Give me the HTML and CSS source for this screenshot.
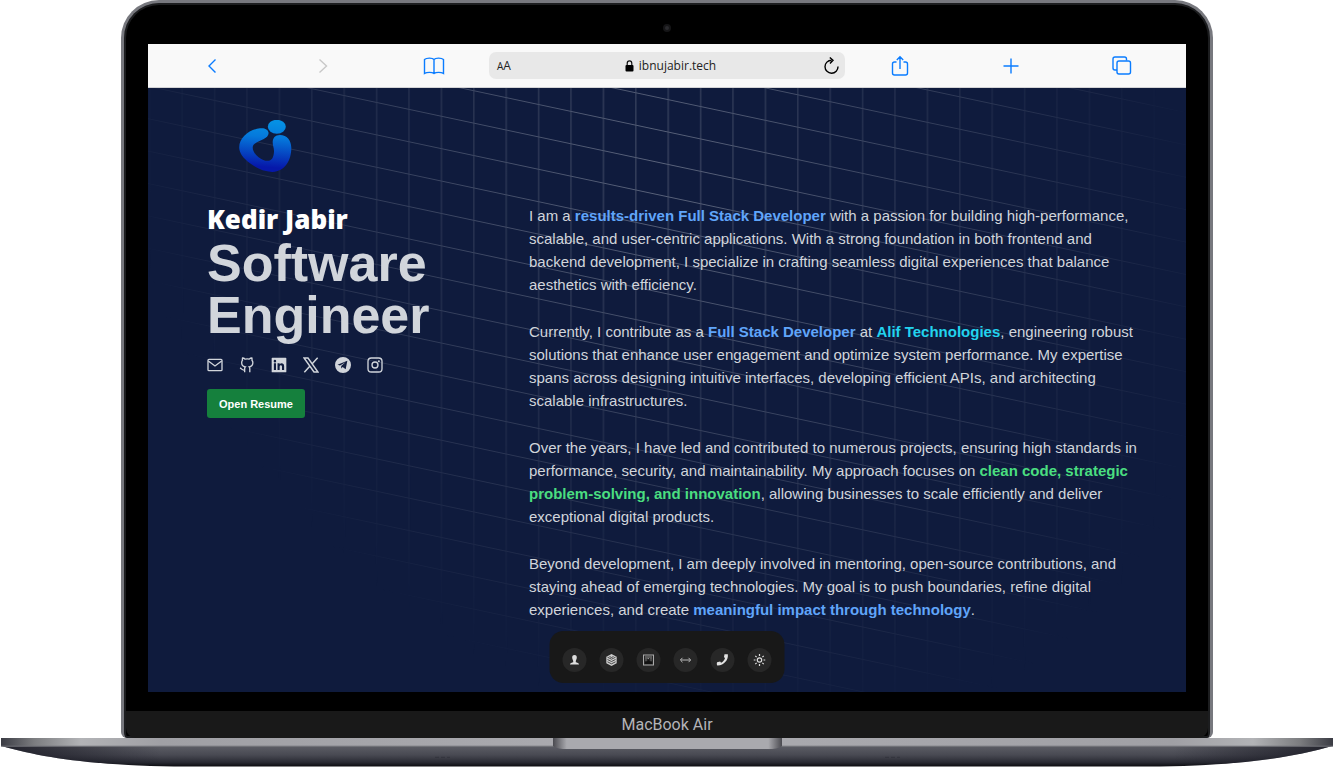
FILE: index.html
```html
<!DOCTYPE html>
<html lang="en">
<head>
<meta charset="utf-8">
<meta name="viewport" content="width=device-width, initial-scale=1">
<title>Kedir Jabir - Software Engineer</title>
<link rel="stylesheet" href="styles.css">
</head>
<body>
<div class="laptop">
  <div class="lid">
    <div class="camera"></div>
    <div class="screen">
      <nav class="toolbar" aria-label="Browser">
        <button class="tool" aria-label="Back"><svg width="22" height="22" viewBox="0 0 22 22"><path d="M14.5 4.500L8 11l6.500 6.500"/></svg></button>
        <button class="tool off" aria-label="Forward"><svg width="22" height="22" viewBox="0 0 22 22"><path d="M7.500 4.500L14.500 11l-7 6.500"/></svg></button>
        <button class="tool" aria-label="Bookmarks"><svg width="22" height="22" viewBox="0 0 22 22"><path d="M11 4.500C9.500 2.700 3.500 2.700 1.500 4.500v14c2.500-1.500 7.500-1.500 9.500 0 2-1.500 7-1.500 9.500 0v-14c-2-1.800-8-1.800-9.500 0zM11 4.500v14"/></svg></button>
        <div class="address">
          <span class="aa"><small>A</small>A</span>
          <span class="url"><svg width="9" height="12" viewBox="0 0 9 12"><path d="M2.200 5.500V3.400a2.300 2.600 0 0 1 4.600 0v2.100" fill="none" stroke="#111" stroke-width="1.200"/><rect x=".5" y="5" width="8" height="6.500" rx="1" fill="#000"/></svg>ibnujabir.tech</span>
          <button class="reload" aria-label="Reload"><svg width="18" height="18" viewBox="0 0 18 18"><path d="M9.500 3.200A6.500 6.500 0 1 0 16 9.500M7.800 .5L11 3.300 8 6.500"/></svg></button>
        </div>
        <button class="tool" aria-label="Share"><svg width="22" height="22" viewBox="0 0 22 22"><path d="M7.500 7H5.500a2 2 0 0 0-2 2v9a2 2 0 0 0 2 2h11a2 2 0 0 0 2-2V9a2 2 0 0 0-2-2h-2M11 14V2M7.800 5L11 1.800 14.200 5"/></svg></button>
        <button class="tool" aria-label="New tab"><svg width="22" height="22" viewBox="0 0 22 22"><path d="M11 3.500v15M3.500 11h15"/></svg></button>
        <button class="tool" aria-label="Tabs"><svg width="22" height="22" viewBox="0 0 22 22"><path d="M6 15h-2a2 2 0 0 1-2-2v-9a2 2 0 0 1 2-2h9.500a2 2 0 0 1 2 2v1.500"/><rect x="6" y="6" width="13.500" height="13" rx="2"/></svg></button>
      </nav>
      <main class="page">
        <svg class="grid-lines" aria-hidden="true">
          <defs>
            <pattern id="cells" width="32.400" height="32.400" patternUnits="userSpaceOnUse" patternTransform="translate(1 -2) skewY(12)"><path d="M0 .5H32.400" stroke="#b4bac6"/><path d="M.8 0V32.400" stroke="#9ca3af" stroke-width="1.500" stroke-opacity=".6"/></pattern>
            <radialGradient id="fade" gradientUnits="userSpaceOnUse" cx="0" cy="0" r="560" gradientTransform="translate(515 82) skewY(12)"><stop offset="0" stop-color="#fff" stop-opacity=".46"/><stop offset="1" stop-color="#fff" stop-opacity="0"/></radialGradient>
            <mask id="spot" maskUnits="userSpaceOnUse" x="0" y="0" width="100%" height="100%"><rect width="100%" height="100%" fill="url(#fade)"/></mask>
          </defs>
          <rect width="100%" height="100%" fill="url(#cells)" mask="url(#spot)"/>
        </svg>
        <header class="brand">
          <svg width="54" height="54" viewBox="0 0 54 54" role="img" aria-label="Logo">
            <defs><linearGradient id="ink" gradientUnits="userSpaceOnUse" x1="30" y1="2" x2="26" y2="52"><stop offset="0" stop-color="#0590e4"/><stop offset=".3" stop-color="#0579dc"/><stop offset=".9" stop-color="#0618aa"/></linearGradient></defs>
            <ellipse cx="37.800" cy="6.800" rx="9" ry="7" fill="url(#ink)"/>
            <path d="M21 8.300C25.500 7.600 29 9.500 29.500 12.500 30 15.500 27.500 17.600 24.300 19.300 19 21.800 13.700 23.500 13.700 27.500 13.700 33 20 38.500 24.300 40 29.500 42 34.500 41 35 31.700 35.200 28 33.700 26 33.700 22.500 33.700 18 36 15 41 15 48 15 52 20 52.300 27.500 52.500 40 46 51.700 33.500 51.900 25 52 17 48 11 43.300 4.500 38.500.2 33 .2 27.500.2 17 11 9.500 21 8.300z" fill="url(#ink)"/>
          </svg>
        </header>
        <div class="columns">
          <section class="intro">
            <p class="name">Kedir Jabir</p>
            <h1>Software Engineer</h1>
            <div class="social">
              <a href="#mail" aria-label="Email"><svg viewBox="0 0 24 24"><g fill="none" stroke="currentColor" stroke-width="2"><rect x="1.500" y="3.500" width="21" height="17" rx="1.500"/><path d="M2 6l10 7.500L22 6"/></g></svg></a>
              <a href="#github" aria-label="GitHub"><svg viewBox="0 0 24 24"><path d="M8.500 23v-5.500c0-1.500.3-2 1-2.800C6 14.200 4 12.500 4 8.500c0-1.500.5-2.700 1.300-3.700C4.800 3.500 5 2.500 5.300 1.500c1.700 0 3 .8 4 1.700a13 13 0 0 1 6 0c1-1 2.500-1.700 4-1.700.4 1 .5 2 .1 3.300.9 1 1.400 2.200 1.400 3.700 0 4-2.300 5.700-5.600 6.200.7.800 1 1.500 1 2.800V23M8.500 19.500C4.500 20.500 4.500 17.500 1.500 16.500" fill="none" stroke="currentColor" stroke-width="2"/></svg></a>
              <a href="#linkedin" aria-label="LinkedIn"><svg viewBox="0 0 24 24"><path fill="currentColor" fill-rule="evenodd" d="M2 1h20a1 1 0 0 1 1 1v20a1 1 0 0 1-1 1H2a1 1 0 0 1-1-1V2a1 1 0 0 1 1-1zM4.300 9.500V19.500H7.500V9.500zM5.900 4.300a1.900 1.900 0 1 0 0 3.800 1.900 1.900 0 0 0 0-3.800zM9.800 9.500v10H13v-5c0-3 3.500-3 3.500 0v5h3.200v-5.800c0-5-5-5.500-6.700-2.700V9.500z"/></svg></a>
              <a href="#x" aria-label="X"><svg viewBox="0 0 24 24"><path d="M1.500 1.500h6l15 21h-6zM22 1L13.500 10.500M10.500 13.500L2 23" fill="none" stroke="currentColor" stroke-width="2.200"/></svg></a>
              <a href="#telegram" aria-label="Telegram"><svg viewBox="0 0 24 24"><path fill="currentColor" fill-rule="evenodd" d="M12 0a12 12 0 1 0 0 24 12 12 0 0 0 0-24zM18.500 5.800L16 18.200 11.500 15 9.300 17.200V13.500L15.500 8 7.500 12.800 3.800 11.500z"/></svg></a>
              <a href="#instagram" aria-label="Instagram"><svg viewBox="0 0 24 24"><g fill="none" stroke="currentColor" stroke-width="2"><rect x="1.500" y="1.500" width="21" height="21" rx="5"/><circle cx="12" cy="12" r="4.500"/></g><circle cx="17.800" cy="6.200" r="1.500" fill="currentColor"/></svg></a>
            </div>
            <button class="resume">Open Resume</button>
          </section>
          <section class="about">
            <p>I am a <strong class="blue">results-driven Full Stack Developer</strong> with a passion for building high-performance,<br>scalable, and user-centric applications. With a strong foundation in both frontend and<br>backend development, I specialize in crafting seamless digital experiences that balance<br>aesthetics with efficiency.</p>
            <p>Currently, I contribute as a <strong class="blue">Full Stack Developer</strong> at <strong class="cyan">Alif Technologies</strong>, engineering robust<br>solutions that enhance user engagement and optimize system performance. My expertise<br>spans across designing intuitive interfaces, developing efficient APIs, and architecting<br>scalable infrastructures.</p>
            <p>Over the years, I have led and contributed to numerous projects, ensuring high standards in<br>performance, security, and maintainability. My approach focuses on <strong class="green">clean code, strategic<br>problem-solving, and innovation</strong>, allowing businesses to scale efficiently and deliver<br>exceptional digital products.</p>
            <p>Beyond development, I am deeply involved in mentoring, open-source contributions, and<br>staying ahead of emerging technologies. My goal is to push boundaries, refine digital<br>experiences, and create <strong class="blue">meaningful impact through technology</strong>.</p>
          </section>
        </div>
        <nav class="dock" aria-label="Sections">
          <button aria-label="About"><svg viewBox="0 0 12 12"><path fill="#ddd" d="M6 1c1.700 0 2.500 1.200 2.300 2.800C8.200 5.300 7.500 6 7.300 7v1.200c1.200.5 3.200.6 3.200 2.300h-9c0-1.700 2-1.800 3.200-2.300V7C4.500 6 3.800 5.300 3.700 3.800 3.500 2.200 4.300 1 6 1z"/></svg></button>
          <button aria-label="Skills"><svg viewBox="0 0 12 12"><path fill="#ccc" d="M6 0l5.200 2.800v6.400L6 12 .8 9.200V2.800z"/><path d="M2 3.200l4 2 4-2M2 5.500l4 2 4-2M2 7.800l4 2 4-2M4 2.500l2 1 2-1" fill="none" stroke="#292929" stroke-width=".8"/></svg></button>
          <button aria-label="Projects"><svg viewBox="0 0 12 12"><rect x="1" y="1" width="10" height="10" fill="none" stroke="#aaa"/><path d="M2.500 3h7M3 4.500h1M5 4.500h1.500M8 4.500h1" stroke="#999" stroke-width=".9"/><path d="M2.500 6h2M7.500 6h2" stroke="#777" stroke-width=".9"/><path d="M2.500 10V8l2-.5L6 6l1.500 1.500 2 .5v2z" fill="#111"/></svg></button>
          <button aria-label="Code"><svg viewBox="0 0 12 12"><path d="M3 3.800L.8 6 3 8.200M9 3.800L11.200 6 9 8.200M1.500 6h9" fill="none" stroke="#bbb"/></svg></button>
          <button aria-label="Contact"><svg viewBox="0 0 12 12"><path fill="#e2e2e2" d="M8 .3L11.300.2c1 5.500-4 11.500-10.500 11.200C-.2 10.500 0 9 .6 8.300l3-.8 1 1.300C6.500 8 8 6 8.500 4.300L7.500 3z"/></svg></button>
          <button aria-label="Theme"><svg viewBox="0 0 12 12"><circle cx="6" cy="6" r="2.200" fill="none" stroke="#ddd" stroke-width="1.200"/><path d="M6 0v2M6 10v2M0 6h2M10 6h2M1.800 1.800l1.300 1.300M8.900 8.900l1.300 1.300M10.200 1.800L8.900 3.100M3.100 8.900l-1.300 1.300" stroke="#ddd" stroke-width="1.200"/></svg></button>
        </nav>
      </main>
    </div>
    <div class="chin">MacBook Air</div>
  </div>
  <svg class="base" viewBox="0 0 1334 30" preserveAspectRatio="none" aria-hidden="true">
    <defs>
      <linearGradient id="under" x2="0" y2="1"><stop offset="0" stop-color="#5d5e66"/><stop offset=".45" stop-color="#484952"/><stop offset=".8" stop-color="#292a33"/><stop offset="1" stop-color="#0c0c10"/></linearGradient>
      <linearGradient id="deck"><stop offset="0" stop-color="#3a3b43"/><stop offset=".025" stop-color="#7c7d80"/><stop offset=".06" stop-color="#b2b3b6"/><stop offset=".12" stop-color="#a0a0a5"/><stop offset=".5" stop-color="#acacb1"/><stop offset=".88" stop-color="#a0a0a5"/><stop offset=".94" stop-color="#b2b3b6"/><stop offset=".975" stop-color="#7c7d80"/><stop offset="1" stop-color="#3a3b43"/></linearGradient>
      <linearGradient id="edge"><stop offset="0" stop-color="#15151f" stop-opacity=".8"/><stop offset=".12" stop-color="#15151f" stop-opacity="0"/><stop offset=".88" stop-color="#15151f" stop-opacity="0"/><stop offset="1" stop-color="#15151f" stop-opacity=".8"/></linearGradient>
      <linearGradient id="notch"><stop offset="0" stop-color="#4a4a50"/><stop offset=".06" stop-color="#a9a9ae"/><stop offset=".94" stop-color="#a9a9ae"/><stop offset="1" stop-color="#4a4a50"/></linearGradient>
    </defs>
    <path d="M1 8H1333C1290 21 1240 28 1160 29.500H174C94 28 44 21 1 8z" fill="url(#under)"/>
    <path d="M1 8H1333C1290 21 1240 28 1160 29.500H174C94 28 44 21 1 8z" fill="url(#edge)"/>
    <rect x="1" width="1332" height="8.500" fill="url(#deck)"/>
    <path d="M1 8.500H1333" stroke="#73747a"/>
    <path d="M553 0H782V8.500Q777 11.500 768 11.500H567Q558 11.500 553 8.500z" fill="url(#notch)"/>
    <path d="M435 20h15M885 20h15" stroke="#33343d" stroke-dasharray="4 2"/>
  </svg>
</div>
</body>
</html>
```
FILE: styles.css
```css
* { box-sizing: border-box; }

body {
  margin: 0;
  background: #fff;
  font-family: "Liberation Sans", Arial, sans-serif;
}

button {
  margin: 0;
  padding: 0;
  border: 0;
  background: none;
  font: inherit;
  cursor: pointer;
}

svg { display: block; }

p, h1 { margin: 0; }

.lid {
  margin: 0 121px;
  padding: 0 1px;
  border: 3px solid #77787e;
  border-bottom: 0;
  border-radius: 38px 38px 6px 6px;
  background: #000;
  box-shadow: inset 0 0 0 2px #1c1d1f;
}

.lid::before {
  content: "";
  display: block;
  height: 21px;
}

.camera {
  width: 8px;
  height: 8px;
  margin: 0 auto;
  border: 2px solid #151517;
  border-radius: 50%;
  background: #2a2a2e;
}

.screen {
  margin: 12px 23px 0;
  background: #0f1b3d;
}

.toolbar {
  display: grid;
  grid-template-columns: repeat(3, 1fr) 356px repeat(3, 1fr);
  align-items: center;
  height: 44px;
  padding: 0 9px;
  border-bottom: 1px solid #d4d4d6;
  background: #f9f9f9;
}

.tool {
  display: flex;
  justify-content: center;
  color: #0a7cff;
}

.tool.off { color: #c8c8c8; }

.tool svg, .reload svg {
  fill: none;
  stroke: currentColor;
  stroke-width: 1.4;
}

.address {
  display: flex;
  align-items: center;
  justify-content: space-between;
  height: 27px;
  padding: 0 5px 0 8px;
  border-radius: 7px;
  background: #e8e8e8;
  color: #222;
  font: 12px "Open Sans", sans-serif;
}

.aa { width: 22px; }

.aa small { font-size: 10px; }

.url {
  display: flex;
  align-items: center;
  gap: 5px;
}

.page {
  position: relative;
  padding: 32px 44px 71px 59px;
}

.grid-lines {
  position: absolute;
  inset: 0;
  width: 100%;
  height: 100%;
}

.brand {
  position: relative;
  height: 52px;
  margin-bottom: 32px;
  padding-left: 32px;
}

.columns {
  position: relative;
  display: grid;
  grid-template-columns: 322px 1fr;
}

.name {
  margin-bottom: 3px;
  color: #fff;
  font: 800 26px/30px "Open Sans", sans-serif;
}

h1 {
  width: 240px;
  color: #d1d5db;
  font-size: 52px;
  line-height: 52px;
}

.social {
  display: flex;
  gap: 16px;
  margin: 16px 0;
}

.social a { color: #d1d5db; }

.social svg { width: 16px; height: 16px; }

.resume {
  height: 29px;
  padding: 0 12px;
  border-radius: 3px;
  background: #15803d;
  color: #fff;
  font-size: 11px;
  font-weight: 700;
}

.about {
  display: grid;
  gap: 24px;
  align-content: start;
  color: #d1d5db;
  font-size: 15px;
  line-height: 23px;
}

.blue { color: #60a5fa; }
.cyan { color: #22d3ee; }
.green { color: #4ade80; }

.dock {
  position: absolute;
  bottom: 9px;
  left: 50%;
  display: flex;
  gap: 13px;
  padding: 17px 13px 11px;
  border-radius: 14px;
  background: #181818;
  transform: translateX(-50%);
}

.dock button {
  display: grid;
  place-items: center;
  width: 24px;
  height: 24px;
  border-radius: 50%;
  background: #272727;
}

.dock svg { width: 12px; height: 12px; }

.chin {
  height: 27px;
  margin: 19px 1px 0;
  border-radius: 0 0 10px 10px;
  background: #191919;
  color: #b4b4b8;
  font: 16px/28px Roboto, sans-serif;
  text-align: center;
}

.base {
  width: 100%;
  height: 29px;
}
```
